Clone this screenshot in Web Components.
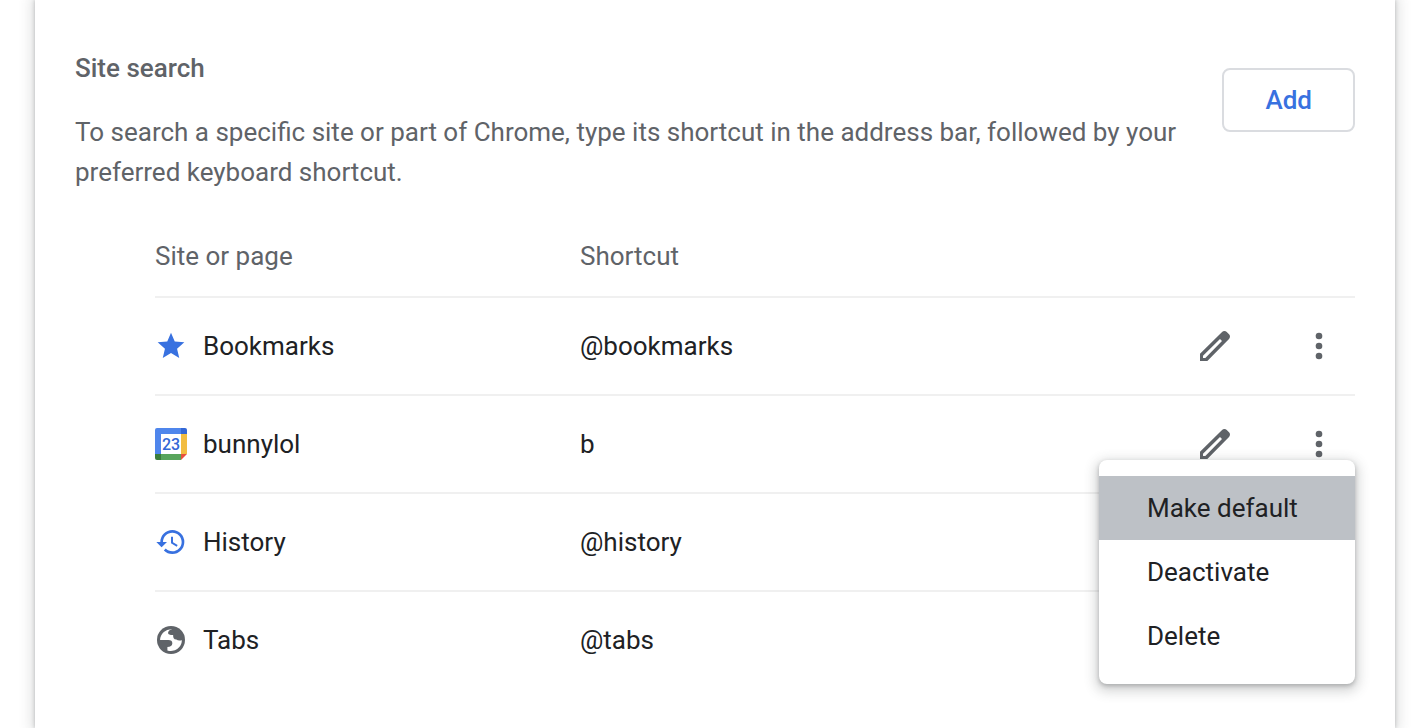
<!DOCTYPE html>
<html lang="en">
<head>
<meta charset="utf-8">
<meta name="viewport" content="width=device-width, initial-scale=1">
<title>Manage search engines and site search</title>
<style>
  body { margin: 0; background: #fff; }
</style>
</head>
<body>
<settings-page>
  <site-search-section>
    <span slot="title">Site search</span>
    <span slot="description">To search a specific site or part of Chrome, type its shortcut in the address bar, followed by your preferred keyboard shortcut.</span>
    <outline-button slot="action">Add</outline-button>
    <engine-table></engine-table>
  </site-search-section>
</settings-page>

<script>
const define = (name, html, setup) => {
  const template = document.createElement('template');
  template.innerHTML = html;
  customElements.define(name, class extends HTMLElement {
    constructor() {
      super();
      this.attachShadow({ mode: 'open' }).append(template.content.cloneNode(true));
    }
    connectedCallback() { if (setup) setup(this, this.shadowRoot); }
  });
};

const ICONS = {
  star: '<path fill="#3871e0" d="M12 17.27 18.18 21l-1.64-7.03L22 9.24l-7.19-.61L12 2 9.19 8.63 2 9.24l5.46 4.73L5.82 21z"/>',
  history: '<path fill="#3871e0" d="M13 3a9 9 0 0 0-9 9H1l3.89 3.89.07.14L9 12H6c0-3.87 3.13-7 7-7s7 3.13 7 7-3.13 7-7 7c-1.93 0-3.68-.79-4.94-2.06l-1.42 1.42A8.95 8.95 0 0 0 13 21a9 9 0 0 0 0-18zm-1 5v5l4.28 2.54.72-1.21-3.5-2.08V8H12z"/>',
  globe: '<circle cx="12" cy="12" r="10.5" fill="#5f6368"/><path fill="#fff" d="M13 3.9C11 4.3 9.8 5.3 9.8 6.6C9.8 8 11 8.3 13.6 8.3C13.6 10.5 14 11.7 16 11.7C17 12.5 18.5 12.5 20.2 12.2A8.3 8.3 0 0 1 9.3 19.8V17.3C11.5 17.3 13 16.5 13 14.5C13 12.8 12 12 10 12H3.8A8.3 8.3 0 0 1 13 3.9z"/>',
  edit: '<path fill="#5f6368" fill-rule="evenodd" d="M20.41 4.94l-1.35-1.35c-.78-.78-2.05-.78-2.83 0L3 16.7V21h4.4L20.41 7.77c.79-.78.79-2.05 0-2.83zM4.8 19.2V17.8L15 7.8 16.2 9 6.2 19.2z"/>',
  more: '<g fill="#5f6368"><circle cx="12" cy="6" r="2"/><circle cx="12" cy="12" r="2"/><circle cx="12" cy="18" r="2"/></g>'
};

define('ui-icon', `
  <style>
    :host { display: block; width: 32px; height: 32px; flex: none; }
    :host([size="large"]) { width: 40px; height: 40px; }
    svg { display: block; width: 100%; height: 100%; }
  </style>
  <svg viewBox="0 0 24 24" aria-hidden="true"></svg>`,
  (el, root) => { root.querySelector('svg').innerHTML = ICONS[el.getAttribute('name')]; });

define('calendar-icon', `
  <style>
    :host { display: block; width: 32px; height: 32px; flex: none; }
    svg { display: block; width: 100%; height: 100%; }
    text { font: 500 16px Roboto, sans-serif; fill: #3367d6; }
  </style>
  <svg viewBox="0 0 32 32" aria-hidden="true">
    <path fill="#4f86ec" d="M2 0H26V6H6V26H0V2A2 2 0 0 1 2 0z"/>
    <path fill="#3367d6" d="M26 0H30A2 2 0 0 1 32 2V6H26z"/>
    <path fill="#f2bd42" d="M26 6H32V26H26z"/>
    <path fill="#3b7d3c" d="M0 26H6V32H2A2 2 0 0 1 0 30z"/>
    <path fill="#58a55c" d="M6 26H26V32H6z"/>
    <path fill="#e9513e" d="M26 26H32L26 32z"/>
    <path fill="#fff" d="M6 6H26V26H6z"/>
    <text x="16" y="22" text-anchor="middle">23</text>
  </svg>`);

define('outline-button', `
  <style>
    :host { display: block; flex: none; }
    button {
      display: block; box-sizing: border-box; height: 64px; padding: 0 41px;
      border: 2px solid #dadce0; border-radius: 8px; background: #fff;
      color: #3871e0; font: 500 26px/40px Roboto, sans-serif;
    }
  </style>
  <button type="button"><slot></slot></button>`);

define('icon-button', `
  <style>
    :host { display: block; }
    button { display: block; margin: 0; padding: 0; border: 0; background: none; }
  </style>
  <button type="button"></button>`,
  (el, root) => {
    const button = root.querySelector('button');
    button.setAttribute('aria-label', el.getAttribute('label'));
    button.innerHTML = `<ui-icon size="large" name="${el.getAttribute('icon')}"></ui-icon>`;
  });

define('action-menu', `
  <style>
    :host {
      display: block; box-sizing: border-box; width: 256px; padding: 16px 0;
      background: #fff; border-radius: 8px;
      box-shadow: 0 2px 4px rgba(60, 64, 67, .3), 0 4px 12px 4px rgba(60, 64, 67, .2);
    }
  </style>
  <div role="menu"><slot></slot></div>`);

define('menu-item', `
  <style>
    :host { display: block; }
    button {
      display: block; width: 100%; height: 64px; padding: 0 48px; border: 0;
      background: none; text-align: left; white-space: nowrap;
      color: #202124; font: 400 26px/40px Roboto, sans-serif;
    }
    :host([highlighted]) button { background: #bdc1c6; }
  </style>
  <button type="button" role="menuitem"><slot></slot></button>`);

define('engine-table', `
  <style>
    :host { display: block; }
    table { width: 100%; border-collapse: separate; border-spacing: 0; table-layout: fixed; }
    col.name { width: 425px; }
    col.actions { width: 256px; }
    th, td { padding: 0; text-align: left; font-weight: 400; }
    th { height: 80px; color: #5f6368; }
    td { height: 96px; border-top: 2px solid #f0f0f0; color: #202124; }
    .site { display: flex; align-items: center; gap: 16px; }
    .actions { position: relative; }
    .buttons { display: flex; justify-content: flex-end; gap: 64px; padding-right: 16px; }
    action-menu { position: absolute; z-index: 1; top: 64px; right: 0; }
  </style>
  <table>
    <colgroup><col class="name"><col><col class="actions"></colgroup>
    <thead><tr><th scope="col">Site or page</th><th scope="col">Shortcut</th><th></th></tr></thead>
    <tbody>
      <tr>
        <td><div class="site"><ui-icon name="star"></ui-icon><span>Bookmarks</span></div></td>
        <td>@bookmarks</td>
        <td class="actions"><div class="buttons"><icon-button icon="edit" label="Edit Bookmarks"></icon-button><icon-button icon="more" label="More actions for Bookmarks"></icon-button></div></td>
      </tr>
      <tr>
        <td><div class="site"><calendar-icon></calendar-icon><span>bunnylol</span></div></td>
        <td>b</td>
        <td class="actions">
          <div class="buttons"><icon-button icon="edit" label="Edit bunnylol"></icon-button><icon-button icon="more" label="More actions for bunnylol"></icon-button></div>
          <action-menu>
            <menu-item highlighted>Make default</menu-item>
            <menu-item>Deactivate</menu-item>
            <menu-item>Delete</menu-item>
          </action-menu>
        </td>
      </tr>
      <tr>
        <td><div class="site"><ui-icon name="history"></ui-icon><span>History</span></div></td>
        <td>@history</td>
        <td></td>
      </tr>
      <tr>
        <td><div class="site"><ui-icon name="globe"></ui-icon><span>Tabs</span></div></td>
        <td>@tabs</td>
        <td></td>
      </tr>
    </tbody>
  </table>`);

define('site-search-section', `
  <style>
    :host { display: block; padding: 48px 40px 40px; }
    header { display: flex; align-items: center; justify-content: space-between; gap: 40px; margin-bottom: 24px; }
    .action { align-self: flex-start; padding-top: 20px; }
    h2, p { margin: 0; color: #5f6368; font-size: 26px; line-height: 40px; }
    h2 { margin-bottom: 24px; font-weight: 500; }
    .list { padding-left: 80px; }
  </style>
  <header>
    <div><h2><slot name="title"></slot></h2><p><slot name="description"></slot></p></div>
    <div class="action"><slot name="action"></slot></div>
  </header>
  <div class="list"><slot></slot></div>`);

define('settings-page', `
  <style>
    :host { display: flow-root; overflow: hidden; font: 400 26px/40px Roboto, sans-serif; }
    main {
      box-sizing: border-box; min-height: 100vh; margin: 0 33px 0 35px; background: #fff;
      box-shadow: 0 0 4px rgba(60, 64, 67, .3), 0 0 12px 4px rgba(60, 64, 67, .15);
    }
  </style>
  <main><slot></slot></main>`);
</script>
</body>
</html>
